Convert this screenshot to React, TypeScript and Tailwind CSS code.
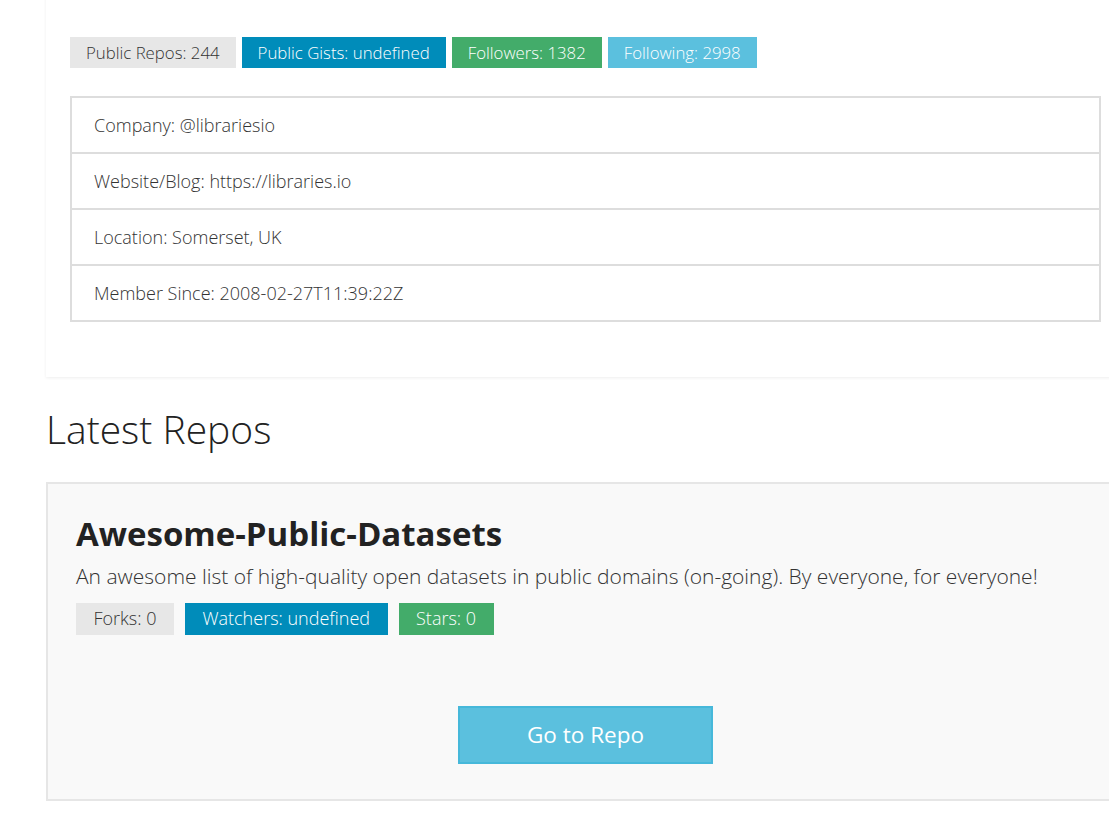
const stats = [
  { label: "Public Repos: 244", cls: "bg-[#e7e7e7] text-[#333]" },
  { label: "Public Gists: undefined", cls: "bg-[#008cba] text-white" },
  { label: "Followers: 1382", cls: "bg-[#43ac6a] text-white" },
  { label: "Following: 2998", cls: "bg-[#5bc0de] text-white" },
];

const details = [
  "Company: @librariesio",
  "Website/Blog: https://libraries.io",
  "Location: Somerset, UK",
  "Member Since: 2008-02-27T11:39:22Z",
];

const repoStats = [
  { label: "Forks: 0", cls: "bg-[#e7e7e7] text-[#333]" },
  { label: "Watchers: undefined", cls: "bg-[#008cba] text-white" },
  { label: "Stars: 0", cls: "bg-[#43ac6a] text-white" },
];

export default function App() {
  return (
    <div className="min-h-[820px] w-full overflow-hidden bg-white font-['Open_Sans',sans-serif] text-[#222]">
      <div className="ml-[46px] w-[1079px]">
        {/* profile card */}
        <div className="-mt-4 bg-white px-6 pt-[53px] pb-[55px] shadow-[0_1px_3px_rgba(0,0,0,0.07)]">
          <div className="flex gap-[6px]">
            {stats.map((s) => (
              <span
                key={s.label}
                className={`flex h-[31px] items-center px-4 text-[16.8px] font-light ${s.cls}`}
              >
                {s.label}
              </span>
            ))}
          </div>

          <ul className="mt-[28px] divide-y-2 divide-[#dddddd] border-2 border-[#dddddd]">
            {details.map((d) => (
              <li
                key={d}
                className="box-content flex h-[54px] items-center px-[22px] text-[18px] font-light text-[#333]"
              >
                {d}
              </li>
            ))}
          </ul>
        </div>

        <h1 className="mt-[31px] text-[39px] leading-[1.1] font-light text-[#222]">
          Latest Repos
        </h1>

        <div className="mt-[31px] border-2 border-[#e6e6e6] bg-[#f9f9f9] px-[28px] pt-[32px] pb-[35px]">
          <h2 className="text-[33px] leading-[1.1] font-bold text-[#222]">
            Awesome-Public-Datasets
          </h2>
          <p className="mt-[9px] text-[21px] leading-[1.5] font-light text-[#333]">
            An awesome list of high-quality open datasets in public domains
            (on-going). By everyone, for everyone!
          </p>
          <div className="mt-[10px] flex gap-[11px]">
            {repoStats.map((s) => (
              <span
                key={s.label}
                className={`flex h-[32px] items-center px-[17.5px] text-[18px] font-light ${s.cls}`}
              >
                {s.label}
              </span>
            ))}
          </div>
          <div className="mt-[71px] flex justify-center">
            <button className="h-[58px] w-[255px] border-2 border-[#46b8da] bg-[#5bc0de] text-[22.5px] text-white">
              Go to Repo
            </button>
          </div>
        </div>
      </div>
    </div>
  );
}
